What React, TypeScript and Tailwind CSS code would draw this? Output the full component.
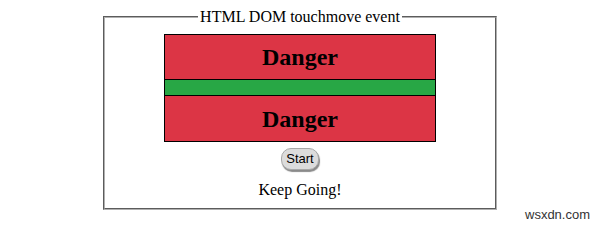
import React from 'react'

const serif = { fontFamily: '"Liberation Serif", "Times New Roman", serif' }

export default function App() {
  return (
    <div className="relative w-[598px] h-[225px] bg-white text-black" style={serif}>
      <div className="pt-[8px] pl-[2px] flex justify-center">
        <fieldset className="w-[394px] border-2 [border-style:groove] border-[#b0b0b0] pb-[9px]">
          <legend className="mx-auto px-[2px] text-[16px] leading-[18px]">HTML DOM touchmove event</legend>
          <div className="flex flex-col items-center">
            <div className="mt-[8px] w-[272px] border border-black">
              <div className="h-[44px] bg-[#dc3545] flex items-center justify-center">
                <h2 className="text-[24px] leading-[28px] font-bold">Danger</h2>
              </div>
              <div className="h-[17px] bg-[#28a745] border-y border-black"></div>
              <div className="h-[45px] bg-[#dc3545] flex items-center justify-center">
                <h2 className="text-[24px] leading-[28px] font-bold">Danger</h2>
              </div>
            </div>
            <button
              className="mt-[6px] h-[22px] px-[4px] rounded-[10px] bg-[#dcdcdc] border border-[#a8a8a8] shadow-[1px_2px_1px_#8a8a8a] text-[13px] leading-[16px] text-black"
              style={{ fontFamily: '"Liberation Sans", Arial, sans-serif' }}
            >
              Start
            </button>
            <p className="mt-[11px] text-[16px] leading-[18px]">Keep Going!</p>
          </div>
        </fieldset>
      </div>
      <div
        className="absolute left-[525px] top-[207px] text-[13px] leading-[15px] text-[#333]"
        style={{ fontFamily: '"Liberation Sans", Arial, sans-serif' }}
      >
        wsxdn.com
      </div>
    </div>
  )
}
